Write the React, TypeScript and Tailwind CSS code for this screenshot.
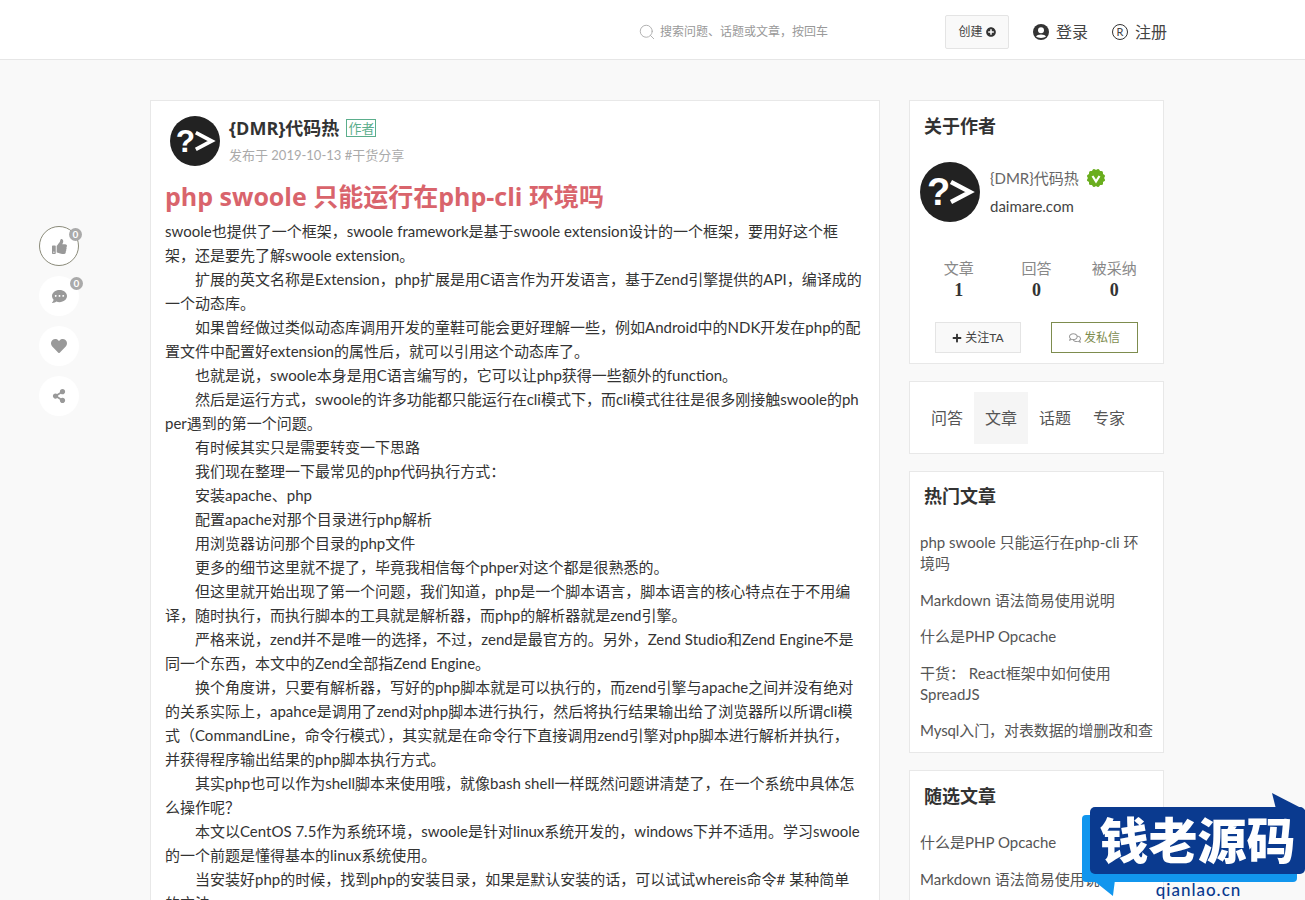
import { FaCommentDots, FaHeart, FaPlus, FaPlusCircle, FaRegComments, FaShareAlt, FaThumbsUp } from "react-icons/fa"
import { Search } from "lucide-react"

const FONT = "font-['Lato','Noto_Sans_CJK_SC',sans-serif]"

// lines are broken by hand where the article breaks them
const LINES: { text: string; indent?: boolean }[] = [
  { text: "swoole也提供了一个框架，swoole framework是基于swoole extension设计的一个框架，要用好这个框" },
  { text: "架，还是要先了解swoole extension。" },
  { text: "扩展的英文名称是Extension，php扩展是用C语言作为开发语言，基于Zend引擎提供的API，编译成的", indent: true },
  { text: "一个动态库。" },
  { text: "如果曾经做过类似动态库调用开发的童鞋可能会更好理解一些，例如Android中的NDK开发在php的配", indent: true },
  { text: "置文件中配置好extension的属性后，就可以引用这个动态库了。" },
  { text: "也就是说，swoole本身是用C语言编写的，它可以让php获得一些额外的function。", indent: true },
  { text: "然后是运行方式，swoole的许多功能都只能运行在cli模式下，而cli模式往往是很多刚接触swoole的ph", indent: true },
  { text: "per遇到的第一个问题。" },
  { text: "有时候其实只是需要转变一下思路", indent: true },
  { text: "我们现在整理一下最常见的php代码执行方式：", indent: true },
  { text: "安装apache、php", indent: true },
  { text: "配置apache对那个目录进行php解析", indent: true },
  { text: "用浏览器访问那个目录的php文件", indent: true },
  { text: "更多的细节这里就不提了，毕竟我相信每个phper对这个都是很熟悉的。", indent: true },
  { text: "但这里就开始出现了第一个问题，我们知道，php是一个脚本语言，脚本语言的核心特点在于不用编", indent: true },
  { text: "译，随时执行，而执行脚本的工具就是解析器，而php的解析器就是zend引擎。" },
  { text: "严格来说，zend并不是唯一的选择，不过，zend是最官方的。另外，Zend Studio和Zend Engine不是", indent: true },
  { text: "同一个东西，本文中的Zend全部指Zend Engine。" },
  { text: "换个角度讲，只要有解析器，写好的php脚本就是可以执行的，而zend引擎与apache之间并没有绝对", indent: true },
  { text: "的关系实际上，apahce是调用了zend对php脚本进行执行，然后将执行结果输出给了浏览器所以所谓cli模" },
  { text: "式（CommandLine，命令行模式），其实就是在命令行下直接调用zend引擎对php脚本进行解析并执行，" },
  { text: "并获得程序输出结果的php脚本执行方式。" },
  { text: "其实php也可以作为shell脚本来使用哦，就像bash shell一样既然问题讲清楚了，在一个系统中具体怎", indent: true },
  { text: "么操作呢？" },
  { text: "本文以CentOS 7.5作为系统环境，swoole是针对linux系统开发的，windows下并不适用。学习swoole", indent: true },
  { text: "的一个前题是懂得基本的linux系统使用。" },
  { text: "当安装好php的时候，找到php的安装目录，如果是默认安装的话，可以试试whereis命令# 某种简单", indent: true },
  { text: "的方法" },
]

const HOT = [
  "php swoole 只能运行在php-cli 环境吗",
  "Markdown 语法简易使用说明",
  "什么是PHP Opcache",
  "干货： React框架中如何使用SpreadJS",
]

function Avatar({ size }: { size: string }) {
  return (
    <svg viewBox="0 0 60 60" className={`${size} shrink-0`}>
      <circle cx="30" cy="30" r="30" fill="#222222" />
      <text x="7" y="43" fontSize="38" fontWeight="700" fill="#ffffff" fontFamily="Liberation Sans, sans-serif">?</text>
      <path d="M31 20 L50 30 L31 40" fill="none" stroke="#ffffff" strokeWidth="4.5" />
    </svg>
  )
}

function VerifiedBadge() {
  return (
    <svg viewBox="0 0 20 20" className="size-[20px]">
      <g fill="#6aae1e">
        <rect x="3" y="3" width="14" height="14" rx="1.5" />
        <rect x="3" y="3" width="14" height="14" rx="1.5" transform="rotate(30 10 10)" />
        <rect x="3" y="3" width="14" height="14" rx="1.5" transform="rotate(60 10 10)" />
      </g>
      <path d="M6.5 8 L10 13.5 L13.5 8" fill="none" stroke="#ffffff" strokeWidth="2.2" />
    </svg>
  )
}

function UserCircle() {
  return (
    <svg viewBox="0 0 16 16" className="size-[16px]">
      <circle cx="8" cy="8" r="8" fill="#333333" />
      <circle cx="8" cy="6.2" r="3" fill="#ffffff" />
      <path d="M3 12.6 C4 9.8 12 9.8 13 12.6 C11.5 14.4 4.5 14.4 3 12.6 Z" fill="#ffffff" />
    </svg>
  )
}

function RailButton({ count, active, children }: { count?: number; active?: boolean; children: React.ReactNode }) {
  return (
    <div className={`relative flex size-[40px] items-center justify-center rounded-full bg-white ${active ? "border border-[#8b8b7a]" : ""}`}>
      {children}
      {count !== undefined && (
        <span className="absolute -right-[4px] top-[1px] flex size-[13px] items-center justify-center rounded-full bg-[#aaaaaa] text-[10px] font-bold text-white">
          {count}
        </span>
      )}
    </div>
  )
}

function Stat({ label, value }: { label: string; value: number }) {
  return (
    <div className="flex flex-col items-center">
      <span className="text-[15px] leading-[20px] text-[#888888]">{label}</span>
      <span className="font-['Liberation_Serif',serif] text-[18px] font-bold leading-[24px] text-[#333333]">{value}</span>
    </div>
  )
}

function SideCard({ className, children }: { className?: string; children: React.ReactNode }) {
  return <div className={`border border-[#e8e8e8] bg-white ${className ?? ""}`}>{children}</div>
}

export default function App() {
  return (
    <div className={`relative h-[900px] overflow-hidden bg-[#f9f9f9] ${FONT}`}>
      <header className="flex h-[60px] items-center border-b border-[#e6e6e6] bg-white pr-[137px] pt-[4px]">
        <div className="ml-[638px] flex w-[307px] items-center gap-[4px]">
          <Search className="size-[18px] text-[#aaaaaa]" strokeWidth={1.2} />
          <span className="text-[12px] text-[#999999]">搜索问题、话题或文章，按回车</span>
        </div>
        <div className="flex h-[34px] w-[64px] items-center justify-center gap-[3px] rounded-[2px] border border-[#e4e4e4] bg-[#f9f9f9] text-[12px] text-[#444444]">
          创建
          <FaPlusCircle className="size-[10px] text-[#333333]" />
        </div>
        <div className="ml-[24px] flex items-center gap-[7px] text-[16px] text-[#444444]">
          <UserCircle />
          登录
        </div>
        <div className="ml-[24px] flex items-center gap-[7px] text-[16px] text-[#444444]">
          <span className="flex size-[16px] items-center justify-center rounded-full border border-[#333333] text-[11px] leading-none">R</span>
          注册
        </div>
      </header>

      <div className="flex items-start pl-[39px] pt-[40px]">
        <div className="mt-[126px] flex w-[40px] flex-col items-center gap-[10px]">
          <RailButton count={0} active>
            <FaThumbsUp className="size-[15px] text-[#999999]" />
          </RailButton>
          <RailButton count={0}>
            <FaCommentDots className="size-[15px] text-[#999999]" />
          </RailButton>
          <RailButton>
            <FaHeart className="size-[16px] text-[#999999]" />
          </RailButton>
          <RailButton>
            <FaShareAlt className="size-[14px] text-[#999999]" />
          </RailButton>
        </div>

        <main className="ml-[71px] w-[730px] shrink-0 border border-[#e8e8e8] bg-white px-[14px] pt-[14px]">
          <div className="flex items-start gap-[9px] pl-[5px]">
            <Avatar size="mt-[1px] size-[50px]" />
            <div className="mt-[1px]">
              <div className="flex items-center gap-[7px]">
                <span className="font-['Open_Sans','Noto_Sans_CJK_SC',sans-serif] text-[18px] font-bold leading-[24px] text-[#333333]">{"{DMR}代码热"}</span>
                <span className="border border-[#5bae8c] px-[1px] text-[13px] leading-[16px] text-[#5bae8c]">作者</span>
              </div>
              <div className="mt-[6px] text-[13px] leading-[18px] text-[#aaaaaa]">发布于 2019-10-13 #干货分享</div>
            </div>
          </div>
          <h1 className="mt-[12px] font-['Open_Sans','Noto_Sans_CJK_SC',sans-serif] text-[25px] font-bold leading-[36px] text-[#d9646c]">php swoole 只能运行在php-cli 环境吗</h1>
          <div className="mt-[5px] whitespace-pre text-[15px] leading-[24px] text-[#333333]">
            {LINES.map((l) => (
              <p key={l.text} className={l.indent ? "pl-[30px]" : ""}>
                {l.text}
              </p>
            ))}
          </div>
        </main>

        <aside className="ml-[29px] flex w-[255px] shrink-0 flex-col gap-[17px]">
          <SideCard className="h-[264px] px-[10px]">
            <h3 className="pl-[4px] pt-[13px] text-[18px] font-bold leading-[24px] text-[#333333]">关于作者</h3>
            <div className="mt-[24px] flex items-center gap-[10px]">
              <Avatar size="size-[60px]" />
              <div>
                <div className="flex items-center gap-[7px] text-[15px] leading-[24px] text-[#666666]">
                  {"{DMR}代码热"}
                  <VerifiedBadge />
                </div>
                <div className="mt-[4px] text-[15px] leading-[24px] text-[#444444]">daimare.com</div>
              </div>
            </div>
            <div className="mt-[36px] grid grid-cols-3">
              <Stat label="文章" value={1} />
              <Stat label="回答" value={0} />
              <Stat label="被采纳" value={0} />
            </div>
            <div className="mt-[20px] flex justify-between px-[15px]">
              <div className="flex h-[31px] w-[86px] items-center justify-center gap-[3px] border border-[#e4e4e4] bg-[#f9f9f9] text-[12px] text-[#444444]">
                <FaPlus className="size-[10px] text-[#333333]" />
                关注TA
              </div>
              <div className="flex h-[31px] w-[87px] items-center justify-center gap-[3px] border border-[#7d8c4e] bg-white text-[12px] text-[#7d8c4e]">
                <FaRegComments className="size-[12px] text-[#999999]" />
                发私信
              </div>
            </div>
          </SideCard>

          <SideCard className="flex h-[73px] items-center px-[10px] text-[16px] text-[#555555]">
            <span className="px-[11px]">问答</span>
            <span className="flex h-[52px] items-center bg-[#f5f5f5] px-[11px]">文章</span>
            <span className="px-[11px]">话题</span>
            <span className="px-[11px]">专家</span>
          </SideCard>

          <SideCard className="h-[282px] overflow-hidden px-[10px]">
            <h3 className="pl-[4px] pt-[12px] text-[18px] font-bold leading-[24px] text-[#333333]">热门文章</h3>
            <ul className="mt-[24px] flex flex-col gap-[15.5px] text-[15px] leading-[21px] text-[#555555]">
              {HOT.map((t) => (
                <li key={t}>{t}</li>
              ))}
              <li className="whitespace-nowrap tracking-[-0.1px]">Mysql入门，对表数据的增删改和查</li>
            </ul>
          </SideCard>

          <SideCard className="h-[300px] overflow-hidden px-[10px]">
            <h3 className="pl-[4px] pt-[13px] text-[18px] font-bold leading-[24px] text-[#333333]">随选文章</h3>
            <ul className="mt-[24px] flex flex-col gap-[15.5px] text-[15px] leading-[21px] text-[#555555]">
              <li>什么是PHP Opcache</li>
              <li>Markdown 语法简易使用说明</li>
            </ul>
          </SideCard>
        </aside>
      </div>

      {/* watermark stamped over the page corner */}
      <div className="absolute bottom-0 right-0 h-[107px] w-[223px]">
        <div className="absolute left-0 top-[22px] h-[67px] w-[215px] rounded-[4px] bg-[#1196ee]" />
        <svg viewBox="0 0 22 16" className="absolute left-[12px] top-[88px] h-[15px] w-[21px]">
          <path d="M0 0 L22 0 L20 16 Z" fill="#1196ee" />
        </svg>
        <svg viewBox="0 0 33 20" className="absolute right-0 top-0 h-[20px] w-[33px]">
          <path d="M0 0 L33 17 L33 20 L5 20 Z" fill="#0a3a8f" />
        </svg>
        <div className="absolute left-[8px] top-[14px] flex h-[67px] w-[215px] items-center justify-center rounded-[5px] bg-[#0a3a8f] text-[49px] font-black leading-none text-white">
          钱老源码
        </div>
        <div className="absolute bottom-[1px] left-[72px] w-[89px] whitespace-nowrap text-center text-[17px] font-medium leading-[18px] tracking-[1px] text-[#0a3a8f]">qianlao.cn</div>
      </div>
    </div>
  )
}
